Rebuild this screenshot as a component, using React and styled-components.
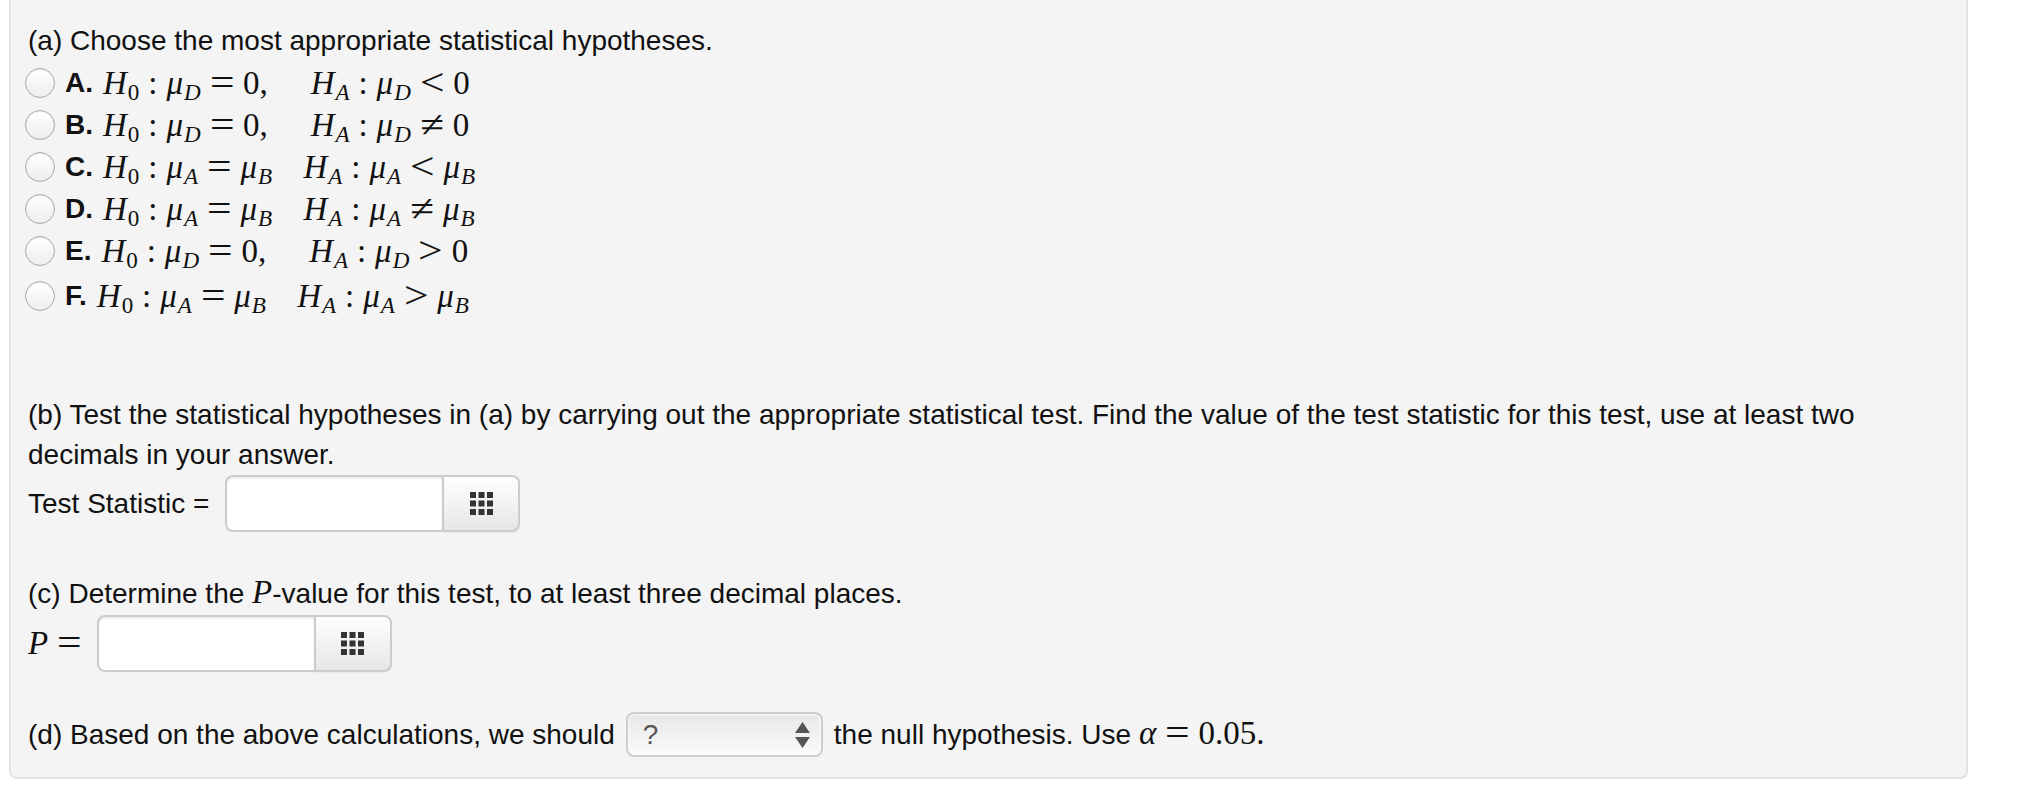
import React from 'react';
import styled, { createGlobalStyle } from 'styled-components';

const GlobalStyle = createGlobalStyle`
  html, body {
    margin: 0;
    background: #fff;
  }
  body {
    font-family: "Liberation Sans", Helvetica, Arial, sans-serif;
    font-size: 28px;
    line-height: 40px;
    color: #111;
  }
`;

const Panel = styled.div`
  box-sizing: border-box;
  width: 1959px;
  margin-left: 9px;
  padding: 21px 18px 20px 17px;
  background: #f4f4f4;
  border: 2px solid #e3e3e3;
  border-top: none;
  border-radius: 0 0 8px 8px;
`;

const Text = styled.p`
  margin: ${(p) => p.$top || 0}px 0 0 0;
`;

const OptionList = styled.div`
  margin-top: 1px;
  margin-bottom: 78px;
`;

const OptionRow = styled.label`
  display: flex;
  align-items: center;
  height: 42px;
  margin-left: -3px;
  margin-top: ${(p) => (p.$last ? 3 : 0)}px;
`;

const Radio = styled.input.attrs({ type: 'radio', name: 'hyp' })`
  appearance: none;
  box-sizing: border-box;
  width: 30px;
  height: 30px;
  margin: 0 10px 0 0;
  border-radius: 50%;
  border: 1px solid #a8a8a8;
  background: linear-gradient(#ffffff, #ededed);
  box-shadow: inset 0 1px 1px rgba(0, 0, 0, 0.08);
`;

const Letter = styled.b`
  margin-right: 10px;
`;

const Math = styled.span`
  font-family: "Liberation Serif", "Times New Roman", serif;
  font-size: 33px;
  line-height: 1;
  white-space: nowrap;
  color: #111;
`;

const V = styled.i`
  font-style: italic;
`;

const Sub = styled.span`
  font-size: 0.7em;
  font-style: ${(p) => (p.$italic ? 'italic' : 'normal')};
  position: relative;
  top: 0.3em;
  margin-left: 1px;
`;

const Rel = styled.span`
  display: inline-block;
  margin: 0 ${(p) => (p.$big ? 0.36 : 0.27)}em;
  transform: ${(p) => (p.$big ? 'scale(1.32, 1.12)' : 'none')};
`;

const Gap = styled.span`
  display: inline-block;
  width: ${(p) => p.$w}em;
`;

const FieldRow = styled.div`
  display: flex;
  align-items: center;
  gap: ${(p) => p.$gap}px;
  margin-top: ${(p) => p.$top || 0}px;
`;

const InputGroup = styled.span`
  display: inline-flex;
  height: 57px;
`;

const TextBox = styled.input`
  box-sizing: border-box;
  width: 217px;
  height: 57px;
  padding: 0 12px;
  border: 2px solid #cccccc;
  border-right: none;
  border-radius: 8px 0 0 8px;
  background: #fff;
  box-shadow: inset 0 2px 2px rgba(0, 0, 0, 0.07);
  font: inherit;
  outline: none;
`;

const PadButton = styled.button`
  box-sizing: border-box;
  width: 78px;
  height: 57px;
  padding: 0;
  display: flex;
  align-items: center;
  justify-content: center;
  border: 2px solid #cccccc;
  border-radius: 0 8px 8px 0;
  background: linear-gradient(#ffffff, #e6e6e6);
  box-shadow: 0 1px 2px rgba(0, 0, 0, 0.05);
`;

const SelectWrap = styled.span`
  position: relative;
  display: inline-block;
  width: 197px;
  height: 45px;
`;

const Select = styled.select`
  appearance: none;
  box-sizing: border-box;
  width: 197px;
  height: 45px;
  padding: 0 0 0 15px;
  border: 2px solid #cdcdcd;
  border-radius: 8px;
  background: linear-gradient(#e7e7e7, #fbfbfb);
  box-shadow: inset 0 0 2px 1px rgba(255, 255, 255, 0.8);
  color: #555;
  font: inherit;
  outline: none;
`;

const Arrows = styled.svg`
  position: absolute;
  right: 13px;
  top: 10px;
  pointer-events: none;
`;

function GridIcon() {
  const cells = [];
  for (let r = 0; r < 3; r++) {
    for (let c = 0; c < 3; c++) {
      cells.push(<rect key={`${r}${c}`} x={c * 8.5} y={r * 8.5} width="6" height="6" />);
    }
  }
  return (
    <svg width="23" height="23" viewBox="0 0 23 23" fill="#333">
      {cells}
    </svg>
  );
}

function AnswerBox() {
  return (
    <InputGroup>
      <TextBox type="text" />
      <PadButton type="button">
        <GridIcon />
      </PadButton>
    </InputGroup>
  );
}

const mu = (s) => (
  <>
    <V>μ</V>
    <Sub $italic>{s}</Sub>
  </>
);

const hyp = (left, op, right) => (
  <>
    <V>H</V>
    <Sub>0</Sub>
    <Rel>:</Rel>
    {left[0]}
    <Rel $big>=</Rel>
    {left[1]}
    <Gap $w={left[1] === '0,' ? 1.3 : 0.95} />
    <V>H</V>
    <Sub $italic>A</Sub>
    <Rel>:</Rel>
    {right[0]}
    <Rel $big>{op}</Rel>
    {right[1]}
  </>
);

const options = [
  { key: 'A', f: hyp([mu('D'), '0,'], '<', [mu('D'), '0']) },
  { key: 'B', f: hyp([mu('D'), '0,'], '≠', [mu('D'), '0']) },
  { key: 'C', f: hyp([mu('A'), mu('B')], '<', [mu('A'), mu('B')]) },
  { key: 'D', f: hyp([mu('A'), mu('B')], '≠', [mu('A'), mu('B')]) },
  { key: 'E', f: hyp([mu('D'), '0,'], '>', [mu('D'), '0']) },
  { key: 'F', f: hyp([mu('A'), mu('B')], '>', [mu('A'), mu('B')]) },
];

export default function App() {
  return (
    <>
      <GlobalStyle />
      <Panel>
        <Text>(a) Choose the most appropriate statistical hypotheses.</Text>
        <OptionList>
          {options.map((o, i) => (
            <OptionRow key={o.key} $last={i === options.length - 1}>
              <Radio />
              <Letter>{o.key}.</Letter>
              <Math>{o.f}</Math>
            </OptionRow>
          ))}
        </OptionList>

        <Text>
          (b) Test the statistical hypotheses in (a) by carrying out the appropriate statistical test. Find the value of
          the test statistic for this test, use at least two
          <br />
          decimals in your answer.
        </Text>
        <FieldRow $gap={16} $top={0}>
          <span>Test Statistic =</span>
          <AnswerBox />
        </FieldRow>

        <Text $top={42}>
          (c) Determine the <Math><V>P</V></Math>-value for this test, to at least three decimal places.
        </Text>
        <FieldRow $gap={6} $top={1}>
          <Math>
            <V>P</V>
            <Rel $big>=</Rel>
          </Math>
          <AnswerBox />
        </FieldRow>

        <FieldRow $gap={11} $top={40}>
          <span>(d) Based on the above calculations, we should</span>
          <SelectWrap>
            <Select defaultValue="?">
              <option>?</option>
              <option>reject</option>
              <option>accept</option>
            </Select>
            <Arrows width="15" height="26" viewBox="0 0 15 26" fill="#555">
              <polygon points="7.5,0 15,11 0,11" />
              <polygon points="0,15 15,15 7.5,26" />
            </Arrows>
          </SelectWrap>
          <span>
            the null hypothesis. Use{' '}
            <Math>
              <V>α</V>
              <Rel $big>=</Rel>0.05.
            </Math>
          </span>
        </FieldRow>
      </Panel>
    </>
  );
}
